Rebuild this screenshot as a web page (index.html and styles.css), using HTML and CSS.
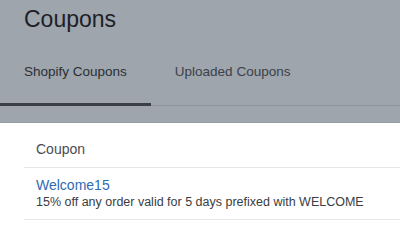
FILE: index.html
```html
<!DOCTYPE html>
<html lang="en">
<head>
<meta charset="utf-8">
<title>Coupons</title>
<link rel="stylesheet" href="styles.css">
</head>
<body>
<header class="page-header">
  <h1 class="title">Coupons</h1>
  <nav class="tabs">
    <div class="tab tab-active">Shopify Coupons</div>
    <div class="tab">Uploaded Coupons</div>
  </nav>
</header>
<main class="content">
  <div class="table">
    <div class="cell cell-head">Coupon</div>
    <div class="cell">
      <a class="coupon-name" href="#">Welcome15</a>
      <div class="coupon-desc">15% off any order valid for 5 days prefixed with WELCOME</div>
    </div>
  </div>
</main>
</body>
</html>
```
FILE: styles.css
```css
html, body {
  margin: 0;
  padding: 0;
  background: #ffffff;
  font-family: "Liberation Sans", Arial, sans-serif;
}

.page-header {
  background: #9ea5ac;
  padding: 5px 0 16px;
  border-bottom: 1px solid #959ca3;
}

.title {
  margin: 0;
  padding: 0 0 0 24px;
  font-size: 23px;
  line-height: 28px;
  font-weight: normal;
  color: #1d2127;
  height: 35px;
}

.tabs {
  display: flex;
  border-bottom: 1px solid #8c939a;
}

.tab {
  padding: 24px 24px 23px;
  font-size: 13.5px;
  line-height: 16px;
  color: #3b4149;
  border-bottom: 3px solid transparent;
  margin-bottom: -1px;
}

.tab-active {
  color: #2a2f36;
  border-bottom-color: #3a3f47;
}

.content {
  padding: 0 0 0 24px;
}

.cell {
  padding: 8px 12px 9px;
  border-bottom: 1px solid #e6e7e8;
}

.cell-head {
  padding: 16px 12px 8px;
  font-size: 14px;
  line-height: 20px;
  color: #4a4d52;
}

.coupon-name {
  display: block;
  font-size: 14px;
  line-height: 18px;
  color: #2f6cb4;
  text-decoration: none;
}

.coupon-desc {
  font-size: 12.5px;
  line-height: 16px;
  color: #3a3d42;
}
```
